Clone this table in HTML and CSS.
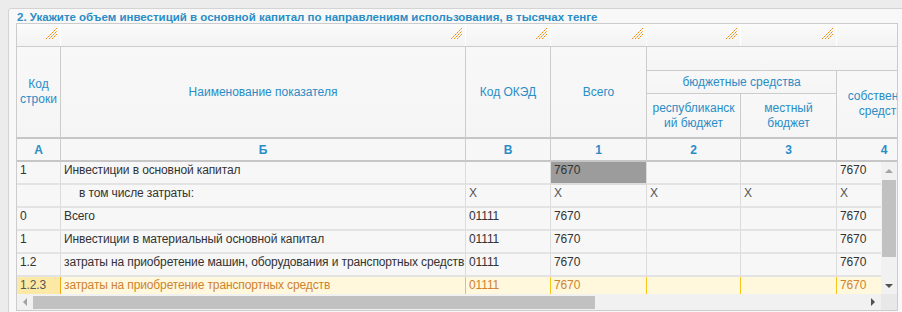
FILE: index.html
```html
<!DOCTYPE html>
<html lang="ru">
<head>
<meta charset="utf-8">
<title>Инвестиции</title>
<link rel="stylesheet" href="styles.css">
</head>
<body>
<svg class="defs" width="0" height="0" aria-hidden="true">
  <defs>
    <g id="grip">
      <rect x="0" y="10" width="1" height="1"/><rect x="1" y="9" width="1" height="1" opacity="0.55"/><rect x="2" y="8" width="1" height="1"/><rect x="3" y="7" width="1" height="1" opacity="0.55"/><rect x="4" y="6" width="1" height="1"/><rect x="5" y="5" width="1" height="1" opacity="0.55"/><rect x="6" y="4" width="1" height="1"/><rect x="7" y="3" width="1" height="1" opacity="0.55"/><rect x="8" y="2" width="1" height="1"/><rect x="9" y="1" width="1" height="1" opacity="0.55"/><rect x="10" y="0" width="1" height="1"/>
      <rect x="3" y="10" width="1" height="1"/><rect x="4" y="9" width="1" height="1" opacity="0.55"/><rect x="5" y="8" width="1" height="1"/><rect x="6" y="7" width="1" height="1" opacity="0.55"/><rect x="7" y="6" width="1" height="1"/><rect x="8" y="5" width="1" height="1" opacity="0.55"/><rect x="9" y="4" width="1" height="1"/><rect x="10" y="3" width="1" height="1" opacity="0.55"/>
      <rect x="6" y="10" width="1" height="1"/><rect x="7" y="9" width="1" height="1" opacity="0.55"/><rect x="8" y="8" width="1" height="1"/><rect x="9" y="7" width="1" height="1" opacity="0.55"/><rect x="10" y="6" width="1" height="1"/>
    </g>
  </defs>
</svg>
<div class="panel">
  <div class="title">2. Укажите объем инвестиций в основной капитал по направлениям использования, в тысячах тенге</div>
  <div class="grid">
    <div class="handles">
      <div class="hcell"><svg class="grip" viewBox="0 0 11 11"><use href="#grip"/></svg></div>
      <div class="hcell"><svg class="grip" viewBox="0 0 11 11"><use href="#grip"/></svg></div>
      <div class="hcell"><svg class="grip" viewBox="0 0 11 11"><use href="#grip"/></svg></div>
      <div class="hcell"><svg class="grip" viewBox="0 0 11 11"><use href="#grip"/></svg></div>
      <div class="hcell"><svg class="grip" viewBox="0 0 11 11"><use href="#grip"/></svg></div>
      <div class="hcell"><svg class="grip" viewBox="0 0 11 11"><use href="#grip"/></svg></div>
      <div class="hcell"></div>
    </div>
    <div class="head">
      <div class="th th-c1 th-last">Код строки</div>
      <div class="th th-c2 th-last">Наименование показателя</div>
      <div class="th th-c3 th-last">Код ОКЭД</div>
      <div class="th th-c4 th-last">Всего</div>
      <div class="th th-group"></div>
      <div class="th th-budget">бюджетные средства</div>
      <div class="th th-own th-last">собственные средства</div>
      <div class="th th-rep th-last">республиканский бюджет</div>
      <div class="th th-loc th-last">местный бюджет</div>
    </div>
    <div class="letters">
      <div class="lc">А</div>
      <div class="lc">Б</div>
      <div class="lc">В</div>
      <div class="lc">1</div>
      <div class="lc">2</div>
      <div class="lc">3</div>
      <div class="lc">4</div>
    </div>
    <div class="body">
      <div class="viewport">
        <div class="row">
          <div class="td">1</div><div class="td">Инвестиции в основной капитал</div><div class="td"></div><div class="td td-dark">7670</div><div class="td"></div><div class="td"></div><div class="td">7670</div>
        </div>
        <div class="row">
          <div class="td"></div><div class="td td-indent">в том числе затраты:</div><div class="td td-x">X</div><div class="td td-x">X</div><div class="td td-x">X</div><div class="td td-x">X</div><div class="td td-x">X</div>
        </div>
        <div class="row">
          <div class="td">0</div><div class="td">Всего</div><div class="td">01111</div><div class="td">7670</div><div class="td"></div><div class="td"></div><div class="td">7670</div>
        </div>
        <div class="row">
          <div class="td">1</div><div class="td">Инвестиции в материальный основной капитал</div><div class="td">01111</div><div class="td">7670</div><div class="td"></div><div class="td"></div><div class="td">7670</div>
        </div>
        <div class="row">
          <div class="td">1.2</div><div class="td">затраты на приобретение машин, оборудования и транспортных средств</div><div class="td">01111</div><div class="td">7670</div><div class="td"></div><div class="td"></div><div class="td">7670</div>
        </div>
        <div class="row row-sel">
          <div class="td td-code">1.2.3</div><div class="td">затраты на приобретение транспортных средств</div><div class="td">01111</div><div class="td">7670</div><div class="td"></div><div class="td"></div><div class="td">7670</div>
        </div>
      </div>
      <div class="vscroll">
        <div class="sbtn"><span class="tri tri-up"></span></div>
        <div class="vtrack"><div class="vthumb"></div></div>
        <div class="sbtn"><span class="tri tri-down"></span></div>
      </div>
      <div class="hscroll">
        <div class="sbtn-h"><span class="tri tri-left"></span></div>
        <div class="htrack"><div class="hthumb"></div></div>
        <div class="sbtn-h"><span class="tri tri-right"></span></div>
      </div>
      <div class="corner"></div>
    </div>
  </div>
</div>
</body>
</html>
```

FILE: styles.css
```css
html, body {
  margin: 0;
  padding: 0;
  background: #ececec;
  overflow: hidden;
  font-family: "Liberation Sans", Arial, sans-serif;
  font-size: 12px;
}

.defs {
  display: block;
  width: 0;
  height: 0;
  overflow: hidden;
}

.panel {
  margin: 8px 0 0 8px;
  width: 910px;
  height: 320px;
  box-sizing: border-box;
  border: 1px solid #d3d3d3;
  border-radius: 3px;
  background: #f8f8f8;
  padding: 0 0 0 7px;
}

.title {
  height: 14px;
  line-height: 17px;
  padding-left: 1px;
  font-weight: bold;
  font-size: 11.5px;
  color: #2a8dc6;
  white-space: nowrap;
}

.grid {
  width: 882px;
  box-sizing: border-box;
  border: 1px solid #cccccc;
  background: #f7f7f7;
}

.handles, .head, .letters {
  width: 880px;
  overflow: hidden;
  display: grid;
  grid-template-columns: 44px 405px 85px 96px 94px 96px 95px;
}

.handles {
  height: 23px;
  box-sizing: border-box;
  border-bottom: 1px solid #cccccc;
  background: linear-gradient(#fbfbfb, #f3f3f3);
}

.hcell {
  border-right: 1px solid #ffffff;
  display: flex;
  justify-content: flex-end;
  align-items: flex-start;
  padding: 4px 3px 0 0;
}

.hcell:last-child {
  border-right: none;
}

.grip {
  width: 11px;
  height: 11px;
  fill: #f28c0c;
  shape-rendering: crispEdges;
}

.head {
  grid-template-rows: 24px 23px 45px;
  color: #2a8dc6;
}

.th {
  box-sizing: border-box;
  border-right: 1px solid #cccccc;
  border-bottom: 1px solid #cccccc;
  display: flex;
  align-items: center;
  justify-content: center;
  text-align: center;
  line-height: 15px;
  padding: 0 3px;
  overflow-wrap: anywhere;
  background: linear-gradient(#f8f8f8, #f5f5f5);
}

.th-last {
  border-bottom: 2px solid #c6c6c6;
}

.th-c1 { grid-column: 1; grid-row: 1 / 4; }
.th-c2 { grid-column: 2; grid-row: 1 / 4; }
.th-c3 { grid-column: 3; grid-row: 1 / 4; }
.th-c4 { grid-column: 4; grid-row: 1 / 4; }
.th-group { grid-column: 5 / 8; grid-row: 1; }
.th-budget { grid-column: 5 / 7; grid-row: 2; }
.th-own { grid-column: 7; grid-row: 2 / 4; }
.th-rep { grid-column: 5; grid-row: 3; }
.th-loc { grid-column: 6; grid-row: 3; }

.letters {
  height: 23px;
}

.lc {
  box-sizing: border-box;
  border-right: 1px solid #cccccc;
  border-bottom: 2px solid #c6c6c6;
  display: flex;
  align-items: center;
  justify-content: center;
  font-weight: bold;
  color: #2a8dc6;
  padding-top: 1px;
}

.body {
  display: grid;
  grid-template-columns: 864px 16px;
  grid-template-rows: 132px 16px;
}

.viewport {
  overflow: hidden;
  background: #f7f7f7;
}

.row {
  display: grid;
  grid-template-columns: 44px 405px 85px 96px 94px 96px 95px;
  width: 915px;
  height: 23px;
}

.td {
  box-sizing: border-box;
  border-right: 1px solid #dcdcdc;
  border-bottom: 2px solid #e3e3e3;
  padding: 1px 3px 0 3px;
  line-height: 15px;
  letter-spacing: -0.12px;
  color: #333333;
  white-space: nowrap;
  overflow: hidden;
}

.td-dark {
  background: #9c9c9c;
  border-bottom-color: #dcdcdc;
}

.td-indent {
  padding-left: 18px;
}

.td-x {
  color: #555555;
}

.row-sel .td {
  background: #fff8dc;
  border-right-color: #f9c51a;
  color: #d0822e;
  border-bottom: none;
}

.row-sel .td-code {
  background: #fde9a6;
  color: #555555;
  border-right-color: #f0a818;
}

.vscroll {
  background: #f1f1f1;
  display: flex;
  flex-direction: column;
}

.sbtn {
  height: 17px;
  display: flex;
  align-items: center;
  justify-content: center;
}

.vtrack {
  flex: 1;
  padding: 1px 1px 0 1px;
}

.vthumb {
  height: 77px;
  background: #c1c1c1;
}

.hscroll {
  background: #f1f1f1;
  display: flex;
}

.sbtn-h {
  width: 16px;
  display: flex;
  align-items: center;
  justify-content: center;
}

.htrack {
  flex: 1;
  padding: 2px 0 1px 0;
}

.hthumb {
  width: 562px;
  height: 13px;
  background: #c1c1c1;
}

.corner {
  background: #e8e8e8;
}

.tri {
  width: 0;
  height: 0;
  display: block;
}

.tri-up {
  border-left: 4px solid transparent;
  border-right: 4px solid transparent;
  border-bottom: 4px solid #a3a3a3;
}

.tri-down {
  border-left: 4px solid transparent;
  border-right: 4px solid transparent;
  border-top: 4px solid #505050;
}

.tri-left {
  border-top: 4px solid transparent;
  border-bottom: 4px solid transparent;
  border-right: 4px solid #a3a3a3;
}

.tri-right {
  border-top: 4px solid transparent;
  border-bottom: 4px solid transparent;
  border-left: 4px solid #505050;
}
```
